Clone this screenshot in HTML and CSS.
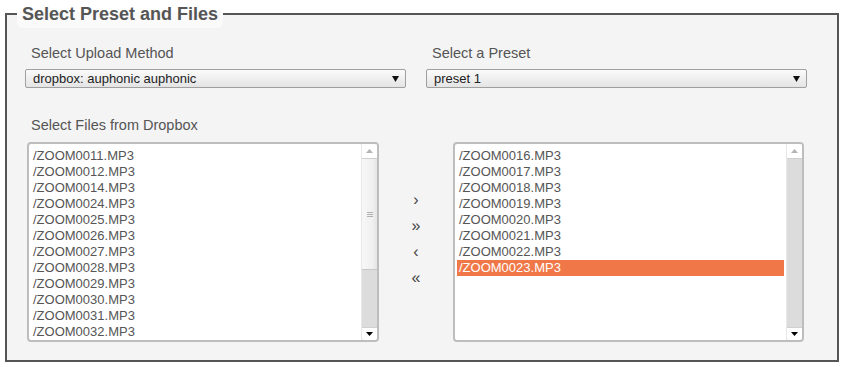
FILE: index.html
```html
<!DOCTYPE html>
<html>
<head>
<meta charset="utf-8">
<link rel="stylesheet" href="styles.css">
</head>
<body>
<fieldset class="panel">
  <legend class="panel-title">Select Preset and Files</legend>
  <div class="top-row">
    <div class="field">
      <div class="label">Select Upload Method</div>
      <div class="select">
        <span>dropbox: auphonic auphonic</span>
        <svg class="caret" width="7" height="6" viewBox="0 0 7 6"><path d="M0 0H7L3.5 6Z" fill="#111"/></svg>
      </div>
    </div>
    <div class="field">
      <div class="label">Select a Preset</div>
      <div class="select">
        <span>preset 1</span>
        <svg class="caret" width="7" height="6" viewBox="0 0 7 6"><path d="M0 0H7L3.5 6Z" fill="#111"/></svg>
      </div>
    </div>
  </div>
  <div class="label files-label">Select Files from Dropbox</div>
  <div class="lists">
    <div class="listbox">
      <div class="items">
        <div class="item">/ZOOM0011.MP3</div>
        <div class="item">/ZOOM0012.MP3</div>
        <div class="item">/ZOOM0014.MP3</div>
        <div class="item">/ZOOM0024.MP3</div>
        <div class="item">/ZOOM0025.MP3</div>
        <div class="item">/ZOOM0026.MP3</div>
        <div class="item">/ZOOM0027.MP3</div>
        <div class="item">/ZOOM0028.MP3</div>
        <div class="item">/ZOOM0029.MP3</div>
        <div class="item">/ZOOM0030.MP3</div>
        <div class="item">/ZOOM0031.MP3</div>
        <div class="item">/ZOOM0032.MP3</div>
      </div>
      <div class="scrollbar">
        <div class="sb-btn"><svg width="7" height="4" viewBox="0 0 7 4"><path d="M0 4H7L3.5 0Z" fill="#b4b4b4"/></svg></div>
        <div class="sb-thumb"><span class="grip"></span></div>
        <div class="sb-track"></div>
        <div class="sb-btn sb-down"><svg width="7" height="4" viewBox="0 0 7 4"><path d="M0 0H7L3.5 4Z" fill="#000"/></svg></div>
      </div>
    </div>
    <div class="movers">
      <span class="mover">›</span>
      <span class="mover">»</span>
      <span class="mover">‹</span>
      <span class="mover">«</span>
    </div>
    <div class="listbox">
      <div class="items">
        <div class="item">/ZOOM0016.MP3</div>
        <div class="item">/ZOOM0017.MP3</div>
        <div class="item">/ZOOM0018.MP3</div>
        <div class="item">/ZOOM0019.MP3</div>
        <div class="item">/ZOOM0020.MP3</div>
        <div class="item">/ZOOM0021.MP3</div>
        <div class="item">/ZOOM0022.MP3</div>
        <div class="item selected">/ZOOM0023.MP3</div>
      </div>
      <div class="scrollbar">
        <div class="sb-btn"><svg width="7" height="4" viewBox="0 0 7 4"><path d="M0 4H7L3.5 0Z" fill="#b4b4b4"/></svg></div>
        <div class="sb-track"></div>
        <div class="sb-btn sb-down"><svg width="7" height="4" viewBox="0 0 7 4"><path d="M0 0H7L3.5 4Z" fill="#000"/></svg></div>
      </div>
    </div>
  </div>
</fieldset>
</body>
</html>
```
FILE: styles.css
```css
html, body {
  margin: 0;
  padding: 0;
  background: #fff;
}
body {
  padding: 0 6px 0 5px;
  font-family: "Liberation Sans", Arial, sans-serif;
  color: #555;
}
.panel {
  margin: 0;
  width: 834px;
  box-sizing: border-box;
  border: 2px solid #555;
  background: #f4f4f4;
  padding: 0 10px 18px 18px;
  min-width: 0;
}
.panel-title {
  margin-left: -8px;
  padding: 0 5px;
  font-size: 18px;
  line-height: 28px;
  font-weight: bold;
  color: #555;
  background: linear-gradient(transparent 0 12px, #fafafa 12px);
  border-radius: 6px;
}
.top-row {
  display: grid;
  grid-template-columns: 381px 381px;
  column-gap: 20px;
  margin-top: 17px;
}
.label {
  font-size: 14.5px;
  line-height: 17px;
  padding-left: 6px;
  color: #555;
}
.field .label {
  margin-bottom: 7px;
}
.select {
  height: 19px;
  box-sizing: border-box;
  border: 1px solid #9f9f9f;
  border-radius: 2px;
  background: linear-gradient(#fbfbfb, #e4e4e4);
  display: flex;
  align-items: center;
  justify-content: space-between;
  padding: 0 6px 0 7px;
  font-size: 13px;
  color: #222;
}
.caret {
  display: block;
}
.files-label {
  margin-top: 29px;
}
.lists {
  display: grid;
  grid-template-columns: 352px 74px 351px;
  margin: 8px 0 0 2px;
}
.listbox {
  height: 200px;
  box-sizing: border-box;
  border: 2px solid #bdbdbd;
  border-radius: 4px;
  background: #fff;
  display: flex;
  overflow: hidden;
}
.items {
  flex: 1;
  padding: 4px 2px 0 2px;
  overflow: hidden;
}
.item {
  font-size: 13px;
  line-height: 16px;
  height: 16px;
  padding-left: 2px;
  color: #555;
  white-space: nowrap;
}
.item.selected {
  background: #f07848;
  color: #fff;
}
.scrollbar {
  width: 15px;
  display: flex;
  flex-direction: column;
  background: #dcdcdc;
  border-left: 1px solid #e8e8e8;
}
.sb-btn {
  height: 15px;
  flex: none;
  background: #fff;
  display: flex;
  align-items: center;
  justify-content: center;
  border-bottom: 1px solid #d0d0d0;
  box-sizing: border-box;
}
.sb-down {
  height: 13px;
  border-bottom: 0;
  border-top: 1px solid #d0d0d0;
  border-radius: 0 0 2px 2px;
}
.sb-thumb {
  height: 111px;
  flex: none;
  background: linear-gradient(90deg, #f7f7f7, #f0f0f0 70%, #e4e4e4);
  border-bottom: 1px solid #c8c8c8;
  box-sizing: border-box;
  display: flex;
  align-items: center;
  justify-content: center;
}
.grip {
  width: 6px;
  height: 5px;
  background: linear-gradient(#b0b0b0 0 1px, transparent 1px 2px, #b0b0b0 2px 3px, transparent 3px 4px, #b0b0b0 4px 5px);
}
.sb-track {
  flex: 1;
}
.movers {
  display: flex;
  flex-direction: column;
  align-items: center;
  padding-top: 45px;
}
.mover {
  font-size: 16px;
  line-height: 26px;
  color: #444;
}
```
